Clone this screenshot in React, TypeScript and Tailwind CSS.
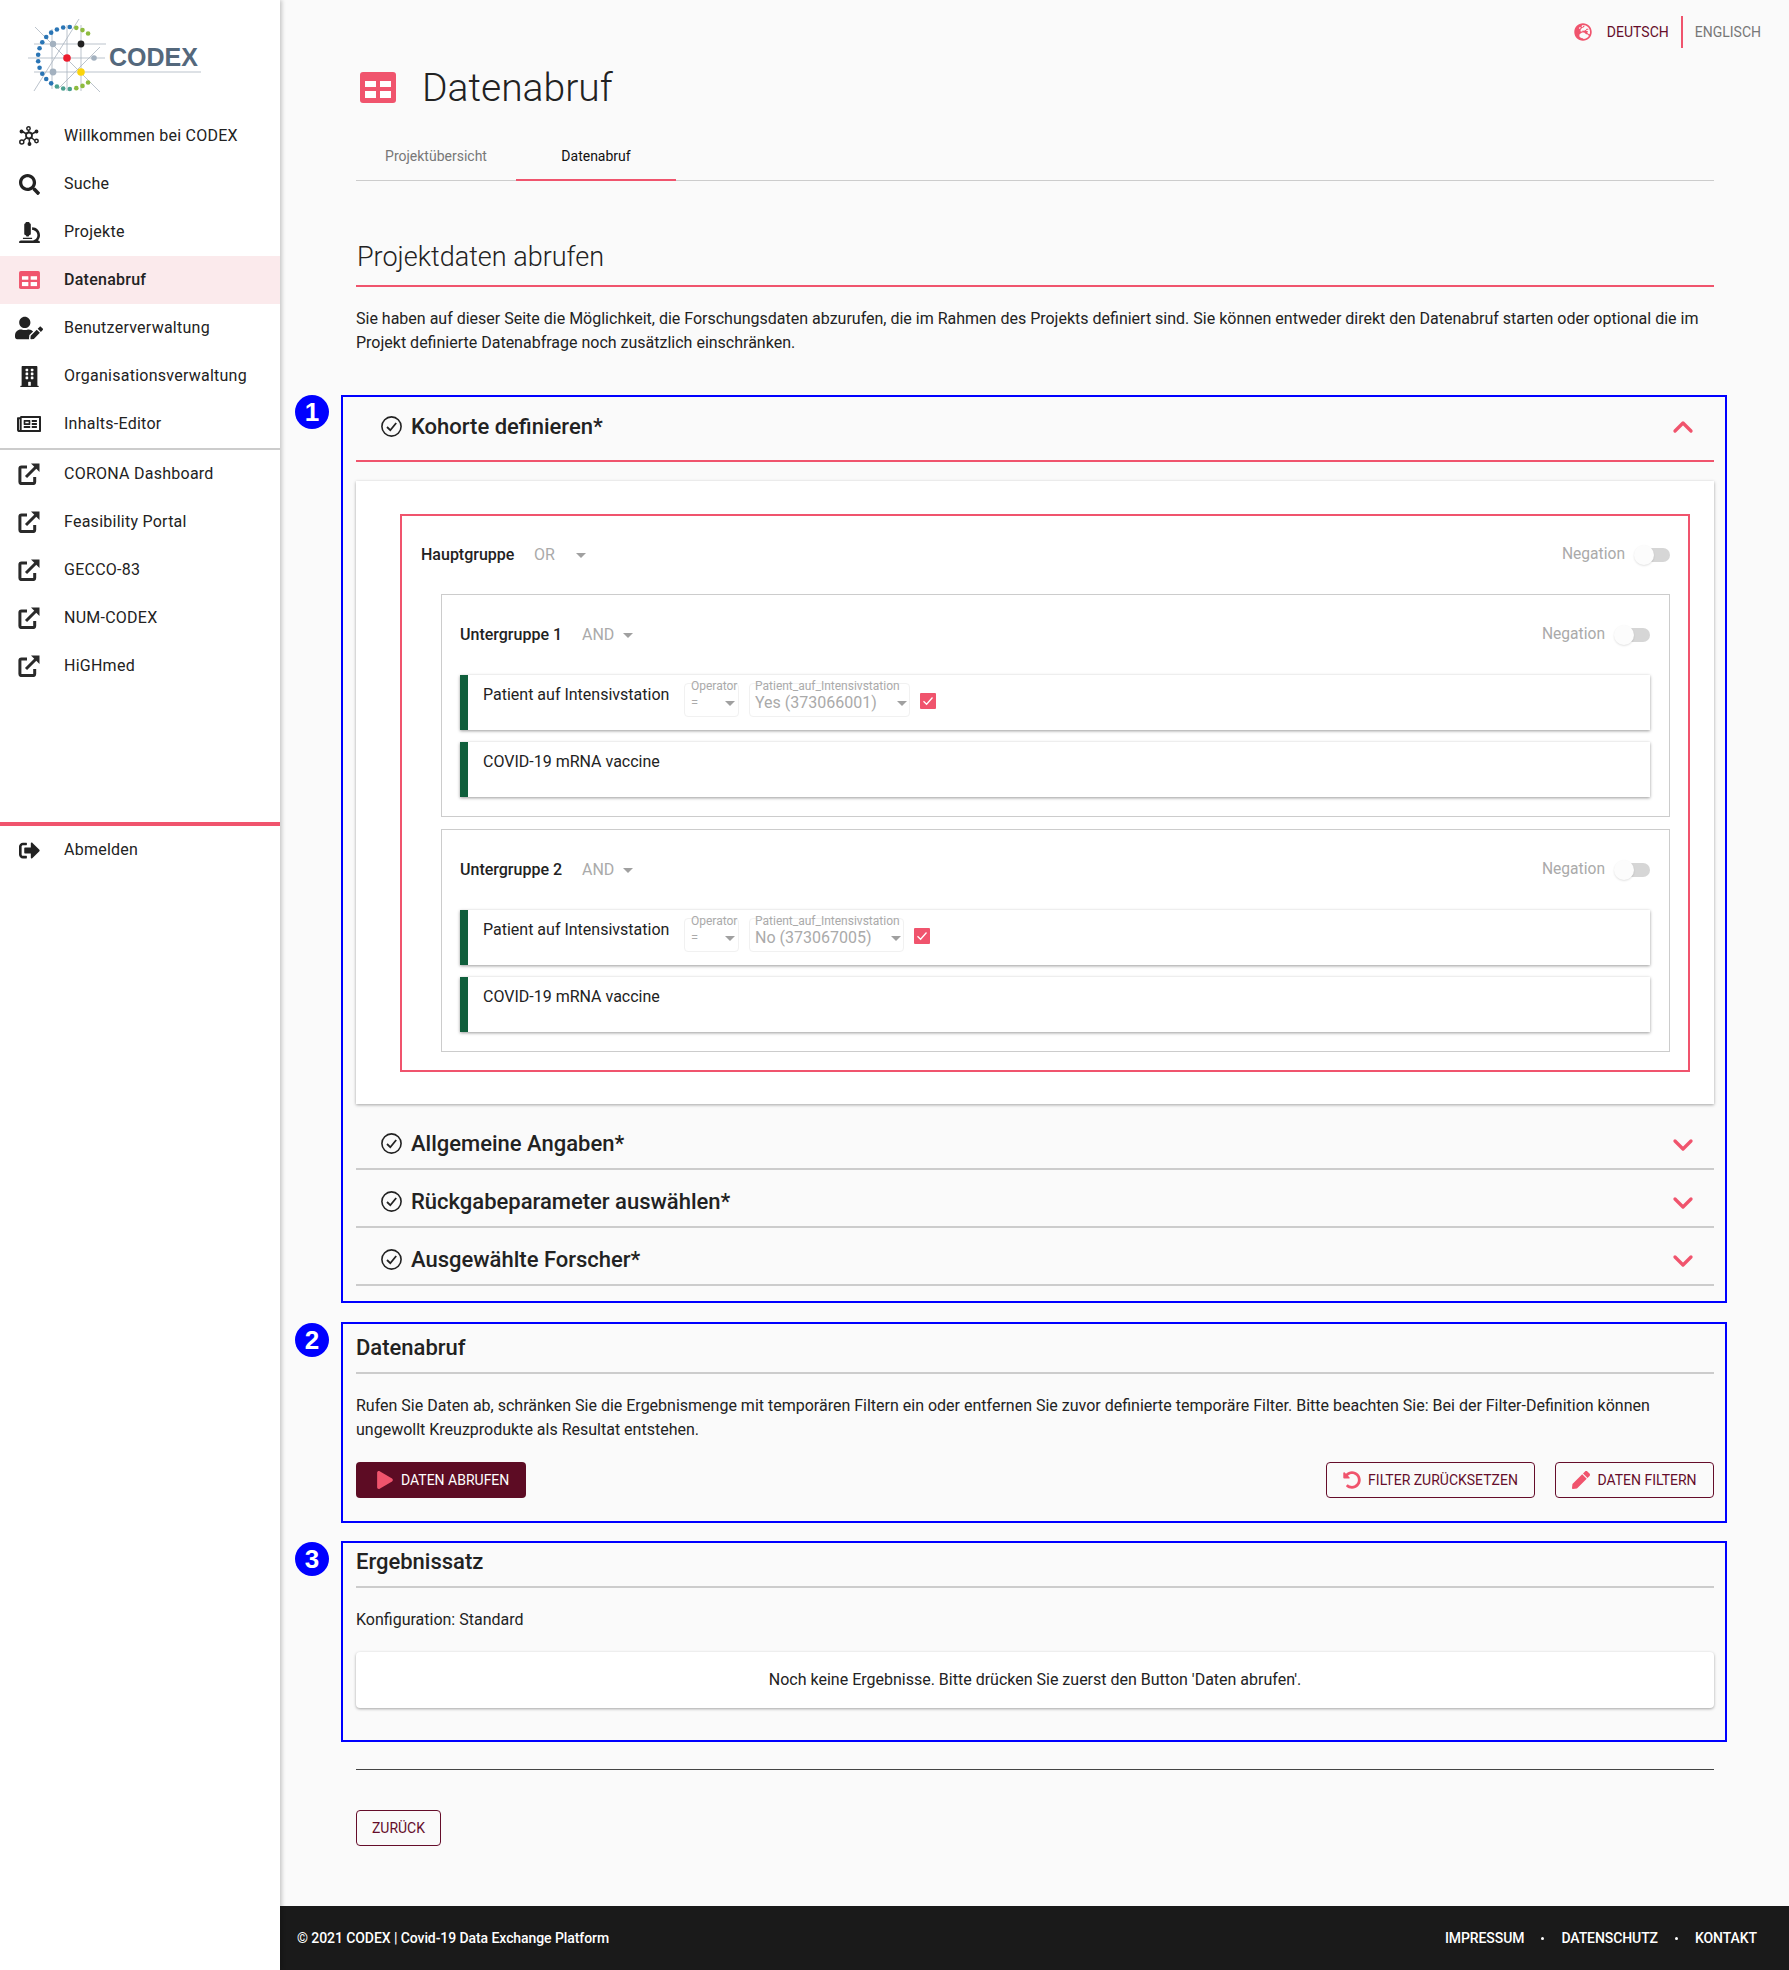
import { ChevronDown, ChevronUp } from "lucide-react";
import {
  FaSearch,
  FaMicroscope,
  FaUserEdit,
  FaBuilding,
  FaRegNewspaper,
  FaSignOutAlt,
  FaGlobeEurope,
  FaUndoAlt,
  FaPen,
  FaPlay,
} from "react-icons/fa";
import type { ReactNode } from "react";

function Logo() {
  const dots = Array.from({ length: 22 }, (_, i) => {
    const a = ((-52 - i * (256 / 21)) * Math.PI) / 180;
    const color = i < 3 || i > 18 ? "#8dbb3f" : i > 15 ? "#4aa08f" : "#2a75b5";
    return { x: 69 + 31 * Math.cos(a), y: 57 + 31 * Math.sin(a), color };
  });
  return (
    <div className="relative h-[96px]">
      <svg width="210" height="96" viewBox="0 0 210 96" className="block">
        <g stroke="#a9b4bf" strokeWidth="0.8">
          <path d="M34 43H106M28 57H105M34 71H201M67 24V90M81 24V90M52 28V88" />
          <path d="M35 26L100 91M34 90L79 18M58 88L100 46" />
        </g>
        {dots.map((d, i) => (
          <circle key={i} cx={d.x} cy={d.y} r="2.3" fill={d.color} />
        ))}
        <circle cx="53" cy="43" r="3.2" fill="#a3b1bf" />
        <circle cx="81" cy="43" r="3.4" fill="#222" />
        <circle cx="67" cy="57" r="3.8" fill="#ec1c2e" />
        <circle cx="94" cy="57" r="2.8" fill="#a3b1bf" />
        <circle cx="53" cy="71" r="3.4" fill="#a3b1bf" />
        <circle cx="81" cy="71" r="3.8" fill="#fbd40b" />
      </svg>
      <span className="absolute left-[109px] top-[41px] text-[25px] leading-[30px] font-bold [font-family:'Liberation_Sans',sans-serif] text-[#54687c]">
        CODEX
      </span>
    </div>
  );
}

function NetworkIcon() {
  return (
    <svg viewBox="0 0 20 20" className="h-[20px] w-[20px]" fill="none" stroke="#222" strokeWidth="1.5">
      <path d="M10 9.5L9.5 3M10 9.5L3 16M10 9.5L17 15.5M10 9.5L17.5 5.5M10 9.5L3.5 5.5M10 9.5L10.5 17" />
      <circle cx="10" cy="9.5" r="3" fill="#fff" strokeWidth="1.8" />
      <circle cx="9.5" cy="2.5" r="1.7" fill="#fff" />
      <circle cx="2.8" cy="16" r="2" fill="#fff" />
      <circle cx="17.5" cy="15" r="1.7" fill="#fff" />
      <circle cx="17.5" cy="5.5" r="1.2" fill="#222" />
      <circle cx="2.5" cy="5.5" r="1.2" fill="#222" />
      <circle cx="10.5" cy="18" r="1.2" fill="#222" />
    </svg>
  );
}

function ExternalIcon() {
  return (
    <svg viewBox="0 0 22 22" className="h-[22px] w-[22px] shrink-0" fill="none" stroke="#2a2a2a" strokeWidth="3">
      <path d="M9 4H3.5a1.6 1.6 0 0 0-1.6 1.6V19a1.6 1.6 0 0 0 1.6 1.6h11.6a1.6 1.6 0 0 0 1.6-1.6v-5" />
      <path d="M8 14L18 4" />
      <path d="M13 .5H21.5V9z" fill="#2a2a2a" stroke="none" />
    </svg>
  );
}

function DataIcon({ className }: { className: string }) {
  return (
    <svg viewBox="0 0 36 31" className={className}>
      <rect width="36" height="31" rx="3" fill="#f0546d" />
      <rect x="5" y="9" width="11" height="6" fill="#fff" />
      <rect x="20" y="9" width="11" height="6" fill="#fff" />
      <rect x="5" y="19" width="11" height="7" fill="#fff" />
      <rect x="20" y="19" width="11" height="7" fill="#fff" />
    </svg>
  );
}

function CheckIcon() {
  return (
    <svg viewBox="0 0 21 21" className="h-[21px] w-[21px] shrink-0" fill="none" stroke="#222" strokeWidth="1.6">
      <circle cx="10.5" cy="10.5" r="9.6" />
      <path d="M6 11L9.3 14.2L15.2 7" strokeWidth="1.8" />
    </svg>
  );
}

function NavItem({ icon, label, active }: { icon: ReactNode; label: string; active?: boolean }) {
  return (
    <div className={`flex h-[48px] items-center ${active ? "bg-[#fbeaec] font-medium" : ""}`}>
      <span className="ml-[17px] flex w-[24px] justify-center">{icon}</span>
      <span className="ml-[23px] text-[16px] tracking-[0.25px] text-[#222]">{label}</span>
    </div>
  );
}

function Sidebar() {
  const ic = "shrink-0 text-[#222]";
  return (
    <aside className="relative z-10 w-[280px] shrink-0 bg-white shadow-[2px_0_4px_rgba(0,0,0,0.2)]">
      <div className="h-[112px] pt-[1px]">
        <Logo />
      </div>
      <NavItem icon={<NetworkIcon />} label="Willkommen bei CODEX" />
      <NavItem icon={<FaSearch size={21} className={ic} />} label="Suche" />
      <NavItem icon={<FaMicroscope size={21} className={ic} />} label="Projekte" />
      <NavItem icon={<DataIcon className="h-[18px] w-[21px]" />} label="Datenabruf" active />
      <NavItem icon={<FaUserEdit size={28} className={ic} />} label="Benutzerverwaltung" />
      <NavItem icon={<FaBuilding size={21} className={ic} />} label="Organisationsverwaltung" />
      <NavItem icon={<FaRegNewspaper size={24} className={ic} />} label="Inhalts-Editor" />
      <div className="h-[2px] bg-[#ccc]" />
      <NavItem icon={<ExternalIcon />} label="CORONA Dashboard" />
      <NavItem icon={<ExternalIcon />} label="Feasibility Portal" />
      <NavItem icon={<ExternalIcon />} label="GECCO-83" />
      <NavItem icon={<ExternalIcon />} label="NUM-CODEX" />
      <NavItem icon={<ExternalIcon />} label="HiGHmed" />
      <div className="mt-[132px] h-[4px] bg-[#f0546d]" />
      <NavItem icon={<FaSignOutAlt size={21} className={ic} />} label="Abmelden" />
    </aside>
  );
}

function Caret({ className = "" }: { className?: string }) {
  return (
    <span className={`h-0 w-0 border-x-[5px] border-t-[5px] border-x-transparent border-t-[#a0a0a0] ${className}`} />
  );
}

function Negation() {
  return (
    <div className="flex items-center">
      <span className="text-[15.6px] text-[#aaa]">Negation</span>
      <div className="relative ml-[9px] flex h-[20px] w-[36px] items-center justify-end">
        <div className="h-[14px] w-[30px] rounded-full bg-[#d6d6d6]" />
        <div className="absolute left-0 top-0 h-[20px] w-[20px] rounded-full bg-[#fcfcfc] shadow-[0_1px_2px_rgba(0,0,0,0.12)]" />
      </div>
    </div>
  );
}

function GroupHeader({
  label,
  op,
  labelClass,
  caretClass,
}: {
  label: string;
  op: string;
  labelClass: string;
  caretClass: string;
}) {
  return (
    <div className="flex h-[40px] items-center">
      <span className={`text-[16px] font-medium text-[#222] ${labelClass}`}>{label}</span>
      <span className="text-[16px] text-[#aaa]">{op}</span>
      <Caret className={caretClass} />
      <div className="ml-auto">
        <Negation />
      </div>
    </div>
  );
}

function Chip({ title, children }: { title: string; children?: ReactNode }) {
  return (
    <div className="flex h-[55px] items-start border-l-[8px] border-[#0f5f3c] bg-white pl-[15px] pt-[8px] shadow-[0_1px_3px_rgba(0,0,0,0.4)]">
      <span className="mt-[1px] w-[186px] whitespace-nowrap text-[16px] leading-[22px] text-[#222]">{title}</span>
      {children}
    </div>
  );
}

function Criterion({ value, widthClass }: { value: string; widthClass: string }) {
  return (
    <div className="ml-[15px] flex items-start">
      <div className="h-[34px] w-[55px] rounded-[4px] border border-[#f1f1f1] pl-[6px] pr-[3px]">
        <div className="-mt-[3px] text-[12px] leading-[11px] text-[#aaa]">Operator</div>
        <div className="flex h-[22px] items-center justify-between text-[13px] text-[#aaa]">
          =<Caret />
        </div>
      </div>
      <div className={`ml-[10px] h-[34px] rounded-[4px] border border-[#f1f1f1] pl-[5px] pr-[2px] ${widthClass}`}>
        <div className="-mt-[3px] text-[12px] leading-[11px] text-[#aaa]">Patient_auf_Intensivstation</div>
        <div className="flex h-[22px] items-center justify-between text-[16px] text-[#aaa]">
          {value}
          <Caret />
        </div>
      </div>
      <div className="ml-[10px] mt-[10px] flex h-[16px] w-[16px] items-center justify-center rounded-[1px] bg-[#f0546d]">
        <svg viewBox="0 0 16 16" className="h-[16px] w-[16px]" fill="none" stroke="#fff" strokeWidth="1.3">
          <path d="M3.5 8.2L6.6 11.3L12.5 4.5" />
        </svg>
      </div>
    </div>
  );
}

function SubGroup({ n, value, widthClass, className }: { n: number; value: string; widthClass: string; className?: string }) {
  return (
    <div className={`ml-[20px] border border-[#ccc] pb-[19px] pl-[18px] pr-[19px] pt-[20px] ${className ?? ""}`}>
      <GroupHeader label={`Untergruppe ${n}`} op="AND" labelClass="w-[122px]" caretClass="ml-[9px]" />
      <div className="mt-[20px] flex flex-col gap-[12px]">
        <Chip title="Patient auf Intensivstation">
          <Criterion value={value} widthClass={widthClass} />
        </Chip>
        <Chip title="COVID-19 mRNA vaccine" />
      </div>
    </div>
  );
}

function AccordionRow({ label }: { label: string }) {
  return (
    <div className="flex h-[58px] items-center border-b-2 border-[#ccc] pl-[25px] pr-[15px] pt-[6px]">
      <CheckIcon />
      <span className="ml-[9px] text-[22px] font-medium text-[#222]">{label}</span>
      <ChevronDown size={32} strokeWidth={2.5} className="ml-auto mt-[3px] text-[#f0546d]" />
    </div>
  );
}

function OutlineButton({ icon, label, widthClass }: { icon: ReactNode; label: string; widthClass: string }) {
  return (
    <button className={`flex h-[36px] items-center justify-center rounded-[4px] border border-[#650d2a] bg-transparent text-[14px] text-[#650d2a] ${widthClass}`}>
      {icon}
      <span className="ml-[7px]">{label}</span>
    </button>
  );
}

function Annotated({ n, className, badgeClass, children }: { n: number; className?: string; badgeClass: string; children: ReactNode }) {
  return (
    <section className={`relative -ml-[15px] -mr-[13px] border-2 border-[#0000ff] pl-[13px] pr-[11px] ${className ?? ""}`}>
      <span className={`absolute -left-[48px] flex h-[34px] w-[34px] items-center justify-center rounded-full bg-[#0000ff] text-[26px] font-bold [font-family:'Liberation_Sans',sans-serif] text-white ${badgeClass}`}>
        {n}
      </span>
      {children}
    </section>
  );
}

export default function App() {
  return (
    <div className="flex min-h-[1970px] bg-[#fafafa] [font-family:Roboto,sans-serif] text-[#222]">
      <Sidebar />
      <main className="flex min-w-0 flex-1 flex-col">
        <div className="flex justify-end pr-[28px] pt-[16px]">
          <div className="flex h-[32px] items-center text-[14px]">
            <FaGlobeEurope size={18} className="text-[#f0546d]" />
            <span className="ml-[15px] text-[#650d2a]">DEUTSCH</span>
            <span className="ml-[12px] h-[32px] w-[2px] bg-[#f0546d]" />
            <span className="ml-[12px] text-[#777]">ENGLISCH</span>
          </div>
        </div>
        <div className="flex flex-1 flex-col pl-[76px] pr-[75px]">
          <div className="mt-[15px] flex h-[48px] items-center pl-[4px]">
            <DataIcon className="h-[31px] w-[36px]" />
            <h1 className="ml-[26px] mt-[2px] text-[39px] font-light leading-[48px] text-[#222]">Datenabruf</h1>
          </div>
          <div className="mt-[21px] flex h-[49px] border-b border-[#ccc]">
            <div className="flex h-[48px] w-[160px] items-center justify-center text-[14px] text-[#777]">Projektübersicht</div>
            <div className="flex h-[49px] w-[160px] items-center justify-center border-b-2 border-[#f0546d] pt-[1px] text-[14px] text-[#111]">
              Datenabruf
            </div>
          </div>
          <h2 className="mt-[56px] flex h-[50px] items-center border-b-2 border-[#f0546d] pb-[8px] pl-[1px] text-[27px] font-light text-[#222]">
            Projektdaten abrufen
          </h2>
          <p className="mt-[20px] text-[16px] leading-[24px]">
            Sie haben auf dieser Seite die Möglichkeit, die Forschungsdaten abzurufen, die im Rahmen des Projekts definiert sind. Sie können entweder direkt den Datenabruf starten oder optional die im Projekt definierte Datenabfrage noch zusätzlich einschränken.
          </p>

          <Annotated n={1} badgeClass="-top-[2px]" className="mt-[40px] pb-[15px]">
            <div className="flex h-[65px] items-center border-b-2 border-[#f0546d] pb-[4px] pl-[25px] pr-[15px]">
              <CheckIcon />
              <span className="ml-[9px] text-[22px] font-medium">Kohorte definieren*</span>
              <ChevronUp size={32} strokeWidth={2.5} className="ml-auto text-[#f0546d]" />
            </div>
            <div className="mt-[19px] bg-white pb-[32px] pl-[44px] pr-[24px] pt-[33px] shadow-[0_1px_3px_rgba(0,0,0,0.35)]">
              <div className="border-2 border-[#f0546d] pb-[18px] pl-[19px] pr-[18px] pt-[19px]">
                <div className="mb-[19px]">
                  <GroupHeader label="Hauptgruppe" op="OR" labelClass="w-[113px]" caretClass="ml-[21px]" />
                </div>
                <SubGroup n={1} value="Yes (373066001)" widthClass="w-[161px]" />
                <SubGroup n={2} value="No (373067005)" widthClass="w-[155px]" className="mt-[12px]" />
              </div>
            </div>
            <div className="mt-[8px]">
              <AccordionRow label="Allgemeine Angaben*" />
              <AccordionRow label="Rückgabeparameter auswählen*" />
              <AccordionRow label="Ausgewählte Forscher*" />
            </div>
          </Annotated>

          <Annotated n={2} badgeClass="-top-[1px]" className="mt-[19px] pb-[23px]">
            <h3 className="flex h-[50px] items-center border-b-2 border-[#ccc] pb-[2px] text-[22px] font-medium">Datenabruf</h3>
            <p className="mt-[20px] text-[16px] leading-[24px]">
              Rufen Sie Daten ab, schränken Sie die Ergebnismenge mit temporären Filtern ein oder entfernen Sie zuvor definierte temporäre Filter. Bitte beachten Sie: Bei der Filter-Definition können ungewollt Kreuzprodukte als Resultat entstehen.
            </p>
            <div className="mt-[20px] flex items-center">
              <button className="flex h-[36px] w-[170px] items-center rounded-[4px] bg-[#5d0c24] pl-[20px] text-[14px] text-white">
                <FaPlay size={18} className="text-[#f0546d]" />
                <span className="ml-[7px]">DATEN ABRUFEN</span>
              </button>
              <div className="ml-auto flex gap-[20px]">
                <OutlineButton icon={<FaUndoAlt size={18} className="text-[#f0546d]" />} label="FILTER ZURÜCKSETZEN" widthClass="w-[209px]" />
                <OutlineButton icon={<FaPen size={18} className="text-[#f0546d]" />} label="DATEN FILTERN" widthClass="w-[159px]" />
              </div>
            </div>
          </Annotated>

          <Annotated n={3} badgeClass="-top-[1px]" className="mt-[18px] pb-[32px]">
            <h3 className="flex h-[45px] items-center border-b-2 border-[#ccc] pb-[6px] text-[22px] font-medium">Ergebnissatz</h3>
            <p className="mt-[20px] text-[16px] leading-[24px]">Konfiguration: Standard</p>
            <div className="mt-[20px] flex h-[56px] items-center justify-center rounded-[4px] bg-white text-[16px] shadow-[0_1px_3px_rgba(0,0,0,0.35)]">
              Noch keine Ergebnisse. Bitte drücken Sie zuerst den Button 'Daten abrufen'.
            </div>
          </Annotated>

          <div className="mt-[27px] h-px bg-[#444]" />
          <button className="mt-[40px] h-[36px] w-[85px] rounded-[4px] border border-[#650d2a] text-[14px] text-[#650d2a]">
            ZURÜCK
          </button>
        </div>
        <footer className="mt-auto flex h-[64px] items-center bg-[#1a1a1a] pl-[17px] pr-[32px] text-[14px] font-medium tracking-[-0.08px] text-white">
          <span>© 2021 CODEX | Covid-19 Data Exchange Platform</span>
          <div className="ml-auto flex items-center gap-[17px]">
            <span>IMPRESSUM</span>
            <span className="h-[3px] w-[3px] rounded-full bg-white" />
            <span>DATENSCHUTZ</span>
            <span className="h-[3px] w-[3px] rounded-full bg-white" />
            <span>KONTAKT</span>
          </div>
        </footer>
      </main>
    </div>
  );
}
